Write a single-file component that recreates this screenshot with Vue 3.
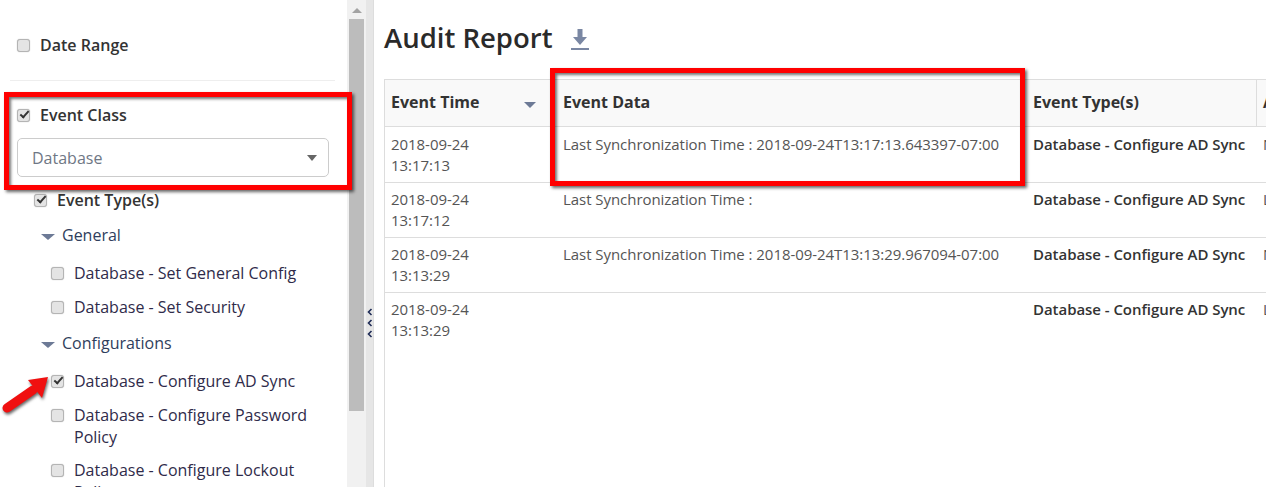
<script setup>
const rows = [
  { date: '2018-09-24', time: '13:17:13', data: 'Last Synchronization Time : 2018-09-24T13:17:13.643397-07:00', type: 'Database - Configure AD Sync', last: 'N' },
  { date: '2018-09-24', time: '13:17:12', data: 'Last Synchronization Time :', type: 'Database - Configure AD Sync', last: 'L' },
  { date: '2018-09-24', time: '13:13:29', data: 'Last Synchronization Time : 2018-09-24T13:13:29.967094-07:00', type: 'Database - Configure AD Sync', last: 'N' },
  { date: '2018-09-24', time: '13:13:29', data: '', type: 'Database - Configure AD Sync', last: 'L' },
]
</script>

<template>
  <div class="page">
    <aside class="side">
      <div class="filters">
        <label class="check top date-range"><span class="box"></span>Date Range</label>
        <hr class="rule" />
        <label class="check top event-class"><span class="box on"></span>Event Class</label>
        <div class="select"><span>Database</span><i class="select-caret"></i></div>
        <label class="check types"><span class="box on"></span>Event Type(s)</label>
        <div class="group"><i class="tri"></i>General</div>
        <label class="check item first"><span class="box"></span>Database - Set General Config</label>
        <label class="check item"><span class="box"></span>Database - Set Security</label>
        <div class="group second"><i class="tri"></i>Configurations</div>
        <label class="check item first"><span class="box on"></span>Database - Configure AD Sync</label>
        <label class="check item"><span class="box"></span><span>Database - Configure Password<br />Policy</span></label>
        <label class="check item tight"><span class="box"></span><span>Database - Configure Lockout<br />Policy</span></label>
      </div>
    </aside>
    <div class="scrollbar">
      <i class="scroll-up"></i>
      <div class="thumb"></div>
    </div>
    <div class="splitter">
      <svg width="6" height="30" viewBox="0 0 6 30" fill="none" stroke="#1d2a55" stroke-width="1.600">
        <path d="M4.500 1 1.500 4 4.500 7M4.500 12 1.500 15 4.500 18M4.500 23 1.500 26 4.500 29" />
      </svg>
    </div>
    <main class="main">
      <h1 class="title">Audit Report
        <svg class="dl" width="18" height="21" viewBox="0 0 18 21" fill="#7a87a3">
          <path d="M6.500 0h5v8H16l-7 8-7-8h4.500zM0 19h18v2H0z" />
        </svg>
      </h1>
      <div class="table">
        <div class="row head">
          <div class="c c1">Event Time<i class="tri sort"></i></div>
          <div class="c c2">Event Data</div>
          <div class="c c3">Event Type(s)</div>
          <div class="c c4">A</div>
        </div>
        <div v-for="(r, i) in rows" :key="i" class="row">
          <div class="c c1">{{ r.date }}<br />{{ r.time }}</div>
          <div class="c c2">{{ r.data }}</div>
          <div class="c c3"><b>{{ r.type }}</b></div>
          <div class="c c4">{{ r.last }}</div>
        </div>
      </div>
    </main>

    <div class="mark mark-a"></div>
    <div class="mark mark-b"></div>
    <svg class="arrow" width="56" height="48" viewBox="0 0 56 48">
      <path d="M7 36 33 18" stroke="#f01010" stroke-width="9" stroke-linecap="round" />
      <path d="M48 5 28 8 42 26z" fill="#f01010" />
    </svg>
  </div>
</template>

<style>
html, body { margin: 0; overflow: hidden; background: #fff; }
</style>

<style scoped>
.page {
  position: relative;
  display: flex;
  width: 1266px;
  height: 487px;
  overflow: hidden;
  font-family: "Open Sans", sans-serif;
  font-size: 16px;
  color: #333;
  background: #fff;
}
.side { width: 347px; flex: none; overflow: hidden; }
.filters { padding: 34px 12px 0 17px; }
.check { display: flex; align-items: flex-start; line-height: 22px; color: #2f2b4a; }
.box {
  position: relative;
  flex: none;
  width: 11px;
  height: 11px;
  margin: 5px 10px 0 0;
  border: 1px solid #b4b4b4;
  border-radius: 3px;
  background: #e4e4e4;
  box-shadow: 0 0 1px #aaa;
}
.box.on::after {
  content: "";
  position: absolute;
  left: 1.500px;
  top: 1px;
  width: 7px;
  height: 3px;
  border-left: 2px solid #333;
  border-bottom: 2px solid #333;
  transform: rotate(-48deg);
}
.top { color: #333; font-weight: 600; font-size: 16px; }
.date-range { height: 22px; }
.rule { margin: 24px 0 23px -7px; width: 325px; height: 1px; border: 0; background: #eee; }
.select {
  display: flex;
  align-items: center;
  justify-content: space-between;
  box-sizing: border-box;
  width: 312px;
  height: 39px;
  margin-top: 12px;
  padding: 0 11px 0 14px;
  border: 1px solid #ccc;
  border-radius: 5px;
  color: #6f7785;
}
.select-caret { width: 0; height: 0; border: 5.500px solid transparent; border-top: 6px solid #666; border-bottom: 0; }
.types { margin: 12px 0 0 17px; color: #333; font-weight: 600; }
.group { display: flex; align-items: center; margin: 13px 0 0 24px; line-height: 22px; color: #2f3e5c; }
.group.second { margin-top: 14px; }
.tri { flex: none; width: 0; height: 0; margin-right: 7px; border: 7px solid transparent; border-top: 6px solid #6d7a96; border-bottom: 0; margin-top: 3px; }
.item { margin: 12px 0 0 34px; color: #2f2b4a; }
.item.first { margin-top: 16px; }
.item.tight { margin-top: 11px; }
.scrollbar { position: relative; flex: none; width: 19px; background: #f1f1f1; }
.scroll-up {
  position: absolute;
  left: 5px;
  top: 8px;
  width: 0;
  height: 0;
  border: 5px solid transparent;
  border-bottom: 5px solid #a3a3a3;
  border-top: 0;
}
.thumb { position: absolute; left: 2px; right: 2px; top: 19px; height: 392px; background: #bcbcbc; }
.splitter {
  flex: none;
  display: flex;
  align-items: flex-start;
  justify-content: center;
  box-sizing: border-box;
  width: 8px;
  padding-top: 308px;
  background: #e6e6e6;
  border-right: 1px solid #ddd;
}
.main { flex: 1; min-width: 0; padding: 0 0 0 10px; overflow: hidden; }
.title {
  display: flex;
  align-items: center;
  margin: 17px 0 0;
  height: 40px;
  font-size: 27.500px;
  font-weight: 600;
  color: #2a2a2a;
}
.dl { margin: 4px 0 0 18px; }
.table { margin-top: 22px; min-height: 420px; border-left: 1px solid #ddd; border-top: 1px solid #ddd; width: 900px; }
.row { display: flex; height: 55px; border-bottom: 1px solid #ddd; font-size: 15px; letter-spacing: -.05px; line-height: 21px; color: #555; box-sizing: border-box; }
.row:nth-child(2) { height: 56px; }
.row:last-child { border-bottom: 0; }
.row.head { height: 47px; background: #f9f9f9; font-weight: 700; font-size: 16px; letter-spacing: 0; color: #333; line-height: 44px; }
.c { box-sizing: border-box; flex: none; padding: 6px 6px 0; white-space: nowrap; }
.row:nth-child(2) .c { padding-top: 7px; }
.head .c { padding-top: 0; }
.head .c3 { border-right: 1px solid #ddd; }
.c1 { width: 172px; position: relative; }
.c2 { width: 470px; }
.c3 { width: 230px; }
.c4 { width: 60px; }
.c3 b { font-weight: 600; color: #333; }
.sort { position: absolute; right: 21px; top: 22px; margin: 0; border-width: 6.500px; border-top-width: 6px; }
.mark {
  position: absolute;
  box-sizing: border-box;
  border: 5px solid #f00;
  box-shadow: 2px 2px 3px rgba(0,0,0,.6), inset 2px 2px 3px rgba(0,0,0,.55);
  pointer-events: none;
}
.mark-a { left: 4px; top: 92px; width: 348px; height: 98px; }
.mark-b { left: 550px; top: 68px; width: 475px; height: 118px; }
.arrow { position: absolute; left: 0; top: 372px; filter: drop-shadow(1px 2px 1.500px rgba(0,0,0,.6)); }
</style>
